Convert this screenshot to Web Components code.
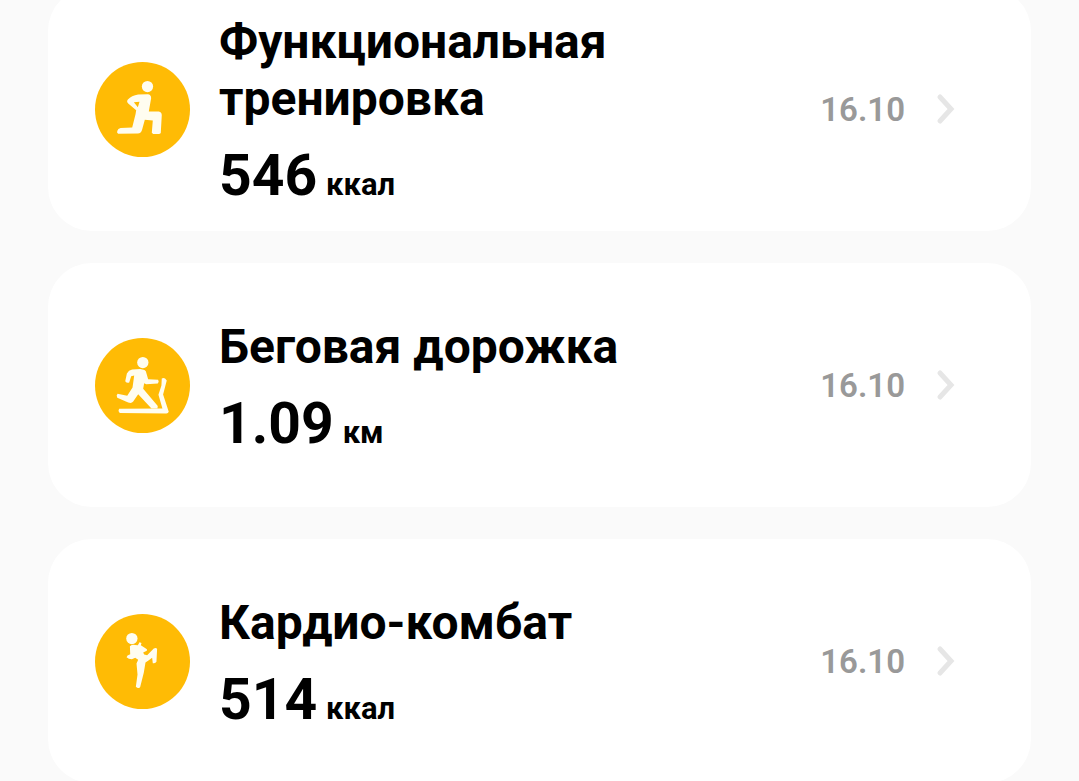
<!DOCTYPE html>
<html lang="ru">
<head>
<meta charset="utf-8">
<meta name="viewport" content="width=device-width, initial-scale=1">
<title>Тренировки</title>
<style>
  html { height: 100%; overflow: hidden; background: #fafafa; }
  body { margin: 0; font-family: Roboto, sans-serif; color: #000; }
</style>
</head>
<body>
<workout-list>
  <workout-card kind="lunge" unit="ккал" date="16.10">Функциональная тренировка<span slot="value">546</span></workout-card>
  <workout-card kind="treadmill" unit="км" date="16.10">Беговая дорожка<span slot="value">1.09</span></workout-card>
  <workout-card kind="kick" unit="ккал" date="16.10">Кардио-комбат<span slot="value">514</span></workout-card>
</workout-list>

<template id="list-template">
  <style>
    /* The list is scrolled, so its first card starts above the window. */
    :host { display: flex; flex-direction: column; gap: 32px; margin-top: -13px; padding: 0 48px; }
  </style>
  <slot></slot>
</template>

<template id="card-template">
  <style>
    :host { display: block; }
    a {
      display: flex; align-items: center; box-sizing: border-box; min-height: 244px;
      padding: 16px 72px 16px 47px; border-radius: 44px; background: #fff;
      color: inherit; text-decoration: none;
    }
    workout-icon { flex: none; margin-right: 29px; }
    .text { flex: 1; min-width: 0; padding-top: 4px; }
    h2 { margin: 0; font-size: 48px; line-height: 57px; font-weight: 700; }
    p { margin: 16px 0 0; font-size: 57px; line-height: 66px; font-weight: 700; }
    .unit { margin-left: 9px; font-size: 31px; line-height: 32px; }
    time { flex: none; margin: 2px 30px 0 24px; font-size: 33px; line-height: 40px; font-weight: 600; color: #999; }
    .chevron { flex: none; width: 24px; height: 32px; }
  </style>
  <a href="#">
    <workout-icon></workout-icon>
    <div class="text">
      <h2><slot></slot></h2>
      <p><slot name="value"></slot><span class="unit"></span></p>
    </div>
    <time></time>
    <svg class="chevron" viewBox="0 0 24 32" fill="none" stroke="#e6e6e6" stroke-width="5" stroke-linecap="round" stroke-linejoin="miter" aria-hidden="true"><path d="M5 4 16 16 5 28"/></svg>
  </a>
</template>

<template id="icon-template">
  <style>
    :host { display: block; width: 95px; height: 95px; }
    svg { display: block; width: 100%; height: 100%; }
    g { display: none; }
    :host([kind="lunge"]) .lunge, :host([kind="treadmill"]) .treadmill, :host([kind="kick"]) .kick { display: inline; }
  </style>
  <svg viewBox="15 17 286 286" fill="#fffdf0" stroke-linecap="round" stroke-linejoin="round" aria-hidden="true">
    <circle cx="158" cy="160" r="143" fill="#ffbb05"/>
    <g class="lunge">
      <circle cx="173" cy="91" r="17"/>
      <path fill-rule="evenodd" d="M145 115 174 114Q184 115 184 126L177 166 207 166Q216 168 216 177L213 231Q211 234 207 234L190 234 186 230 189 193 165 191 157 220Q154 232 144 232L85 233Q80 232 82 225 84 218 92 216L127 214 137 174 139 162 115 142Q109 137 114 130 125 118 145 115ZM132 138 144 153 149 137Z"/>
    </g>
    <g class="treadmill">
      <circle cx="159" cy="91" r="17"/>
      <path d="M127 112 151 110 164 113Q169 115 170 124L175 141 205 143Q209 149 204 154L169 156 163 153 160 170 204 222 203 229 185 229 145 186 130 208Q125 215 115 211L82 197Q78 190 83 185L112 191 128 166 133 130 124 132 118 151Q111 154 106 147L111 124Q116 114 127 112Z"/>
      <path d="M216 139Q221 136 226 139L231 145 220 187 237 239Q235 245 228 244L90 243Q83 237 88 230L218 229 206 188 215 160Z"/>
    </g>
    <g class="kick">
      <circle cx="126" cy="91" r="17"/>
      <path d="M120 114Q126 109 135 110L144 111 149 102 155 104 153 111 168 121Q174 124 171 128L160 133 163 139 172 141 192 121Q199 117 202 122L200 161Q197 167 189 165L187 149 177 156 167 163 162 193 151 237Q149 242 142 239L138 236 143 199 140 166 145 155 136 149 126 153Q116 153 110 147L113 142 121 138Z"/>
    </g>
  </svg>
</template>

<script>
  class TemplateElement extends HTMLElement {
    constructor() {
      super();
      const template = document.getElementById(this.constructor.template);
      this.attachShadow({ mode: "open" }).append(template.content.cloneNode(true));
    }
  }

  class WorkoutIcon extends TemplateElement {
    static template = "icon-template";
  }

  class WorkoutCard extends TemplateElement {
    static template = "card-template";
    connectedCallback() {
      const root = this.shadowRoot;
      root.querySelector("workout-icon").setAttribute("kind", this.getAttribute("kind"));
      root.querySelector(".unit").textContent = this.getAttribute("unit");
      root.querySelector("time").textContent = this.getAttribute("date");
    }
  }

  class WorkoutList extends TemplateElement {
    static template = "list-template";
  }

  customElements.define("workout-icon", WorkoutIcon);
  customElements.define("workout-card", WorkoutCard);
  customElements.define("workout-list", WorkoutList);
</script>
</body>
</html>
